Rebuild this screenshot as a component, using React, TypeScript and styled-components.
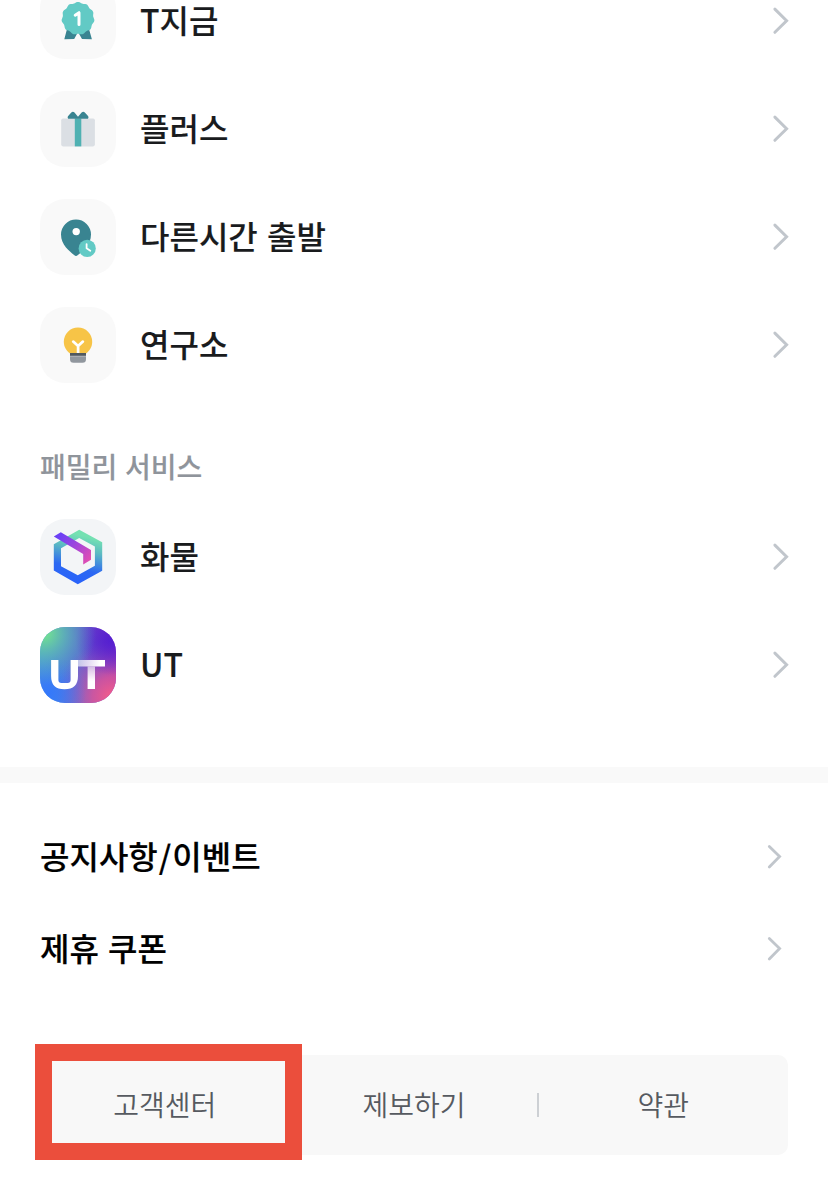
import React from "react";
import styled, { createGlobalStyle } from "styled-components";

const GlobalStyle = createGlobalStyle`
  * { box-sizing: border-box; }
  body {
    margin: 0;
    background: #fff;
    font-family: "Noto Sans CJK KR", sans-serif;
    overflow: hidden;
  }
`;

const Screen = styled.main`
  width: 828px;
  height: 1186px;
  overflow: hidden;
  background: #fff;
  display: flex;
  flex-direction: column;
`;

const ServiceList = styled.section<{ $top: number }>`
  display: flex;
  flex-direction: column;
  gap: 32px;
  flex: none;
  margin-top: ${(p) => p.$top}px;
  padding: 0 38px 0 40px;
`;

const ServiceRow = styled.div`
  display: flex;
  align-items: center;
  height: 76px;
`;

const IconTile = styled.div<{ $bg: string }>`
  width: 76px;
  height: 76px;
  border-radius: 25px;
  overflow: hidden;
  background: ${(p) => p.$bg};
  svg { display: block; }
`;

const ServiceName = styled.span`
  flex: 1;
  margin-left: 24px;
  padding-bottom: 4px;
  font-size: 32px;
  line-height: 36px;
  font-weight: 500;
  word-spacing: 2px;
  -webkit-text-stroke: 0.12px currentColor;
  color: #191b1d;
`;

const SectionTitle = styled.h2`
  flex: none;
  margin: 63px 0 1px 40px;
  height: 40px;
  font-size: 28px;
  line-height: 40px;
  font-weight: 500;
  word-spacing: 1.5px;
  -webkit-text-stroke: 0.12px currentColor;
  color: #8f949b;
`;

const Divider = styled.div`
  flex: none;
  height: 16px;
  margin-top: 64px;
  background: #f9f9f9;
`;

const MenuList = styled.nav`
  flex: none;
  display: flex;
  flex-direction: column;
  padding: 28px 45px 0 40px;
`;

const MenuRow = styled.div`
  display: flex;
  align-items: center;
  justify-content: space-between;
  height: 92px;
`;

const MenuLabel = styled.span`
  padding-bottom: 4px;
  font-size: 32px;
  line-height: 40px;
  font-weight: 500;
  word-spacing: 2px;
  -webkit-text-stroke: 0.2px currentColor;
  color: #000;
`;

const Slash = styled.span`
  margin: 0 1px;
`;

const Footer = styled.footer`
  position: relative;
  flex: none;
  display: flex;
  height: 100px;
  margin: 60px 40px 0;
  border-radius: 10px;
  background: #f8f8f8;
`;

const FooterLink = styled.div`
  flex: 1;
  display: flex;
  align-items: center;
  justify-content: center;
  padding-bottom: 2px;
  font-size: 28px;
  font-weight: 350;
  line-height: 40px;
  color: #565a60;
`;

const Separator = styled.i`
  align-self: center;
  width: 2px;
  height: 24px;
  margin: 0 0 0 -2px;
  background: #cdd0d4;
`;

const Highlight = styled.div`
  position: absolute;
  left: -4.7px;
  top: -11px;
  width: 267px;
  height: 116px;
  border: 17px solid #eb4e3c;
`;

const Chevron = ({ small = false }: { small?: boolean }) =>
  small ? (
    <svg width="18" height="28" viewBox="0 0 18 28" fill="none" stroke="#c1c6cc" strokeWidth="2.8" strokeLinecap="round" strokeLinejoin="miter">
      <path d="M4.3 3.4 14.6 13.6 4.3 23.9" />
    </svg>
  ) : (
    <svg width="20" height="30" viewBox="0 0 20 30" fill="none" stroke="#c1c6cc" strokeWidth="3" strokeLinecap="round" strokeLinejoin="miter">
      <path d="M4.9 3.1 16.6 14.7 4.9 26.3" />
    </svg>
  );

const scallop = Array.from({ length: 121 }, (_, i) => {
  const a = (i / 120) * Math.PI * 2;
  const r = 15.9 + 0.6 * Math.cos(a * 11);
  return `${(38 + r * Math.sin(a)).toFixed(2)},${(35.4 - r * Math.cos(a)).toFixed(2)}`;
}).join(" ");

const Medal = () => (
  <svg width="76" height="76" viewBox="0 0 76 76">
    <path d="M27 46 24.3 56.3 34.2 56 38 49 42 56 51.9 56.3 49 46Z" fill="#398491" />
    <polygon points={scallop} fill="#62cac5" />
    <path d="M35.2 32.2 39 29.7V41.5" fill="none" stroke="#fff" strokeWidth="3" strokeLinecap="round" strokeLinejoin="round" />
  </svg>
);

const Gift = () => (
  <svg width="76" height="76" viewBox="0 0 76 76">
    <rect x="21.2" y="27.4" width="33.7" height="28" rx="1.8" fill="#dbdfe4" />
    <rect x="34.8" y="27.4" width="6.5" height="28" fill="#4fb1b2" />
    <path d="M28.2 27.7c-1-1.1-.5-2.2.4-3.1l2.7-3.1c1.1-1.2 2.3-.9 3.2.1L38 25.8l3.6-4.2c1-1 2.2-1.3 3.2-.1l2.8 3.1c.9.9 1.3 2 .4 3.1Z" fill="#398491" />
  </svg>
);

const TimedPin = () => (
  <svg width="76" height="76" viewBox="0 0 76 76">
    <path d="M36 20.5a15 15 0 0 1 15 15c0 10.5-8.4 16.4-13.1 20.6a2.8 2.8 0 0 1-3.8 0C29.4 51.9 21 46 21 35.5a15 15 0 0 1 15-15Z" fill="#398491" />
    <circle cx="36.2" cy="32.6" r="3.7" fill="#fff" />
    <circle cx="47.2" cy="49.4" r="8.6" fill="#62cac5" />
    <path d="M46.6 45.1v4.1l3.7 2.5" fill="none" stroke="#fff" strokeWidth="1.8" strokeLinecap="round" strokeLinejoin="round" />
  </svg>
);

const Bulb = () => (
  <svg width="76" height="76" viewBox="0 0 76 76">
    <path d="M30 46.5c-3.5-2.6-6.2-6.7-6.2-11.8a14.2 14.2 0 0 1 28.4 0c0 5.1-2.7 9.2-6.2 11.8Z" fill="#f7c447" />
    <path d="m33.2 34.6 4.9 4.5 4.8-4.5M38.1 39.1V46" fill="none" stroke="#fff" strokeWidth="2.7" strokeLinecap="round" strokeLinejoin="round" />
    <path d="M30 46h16v3H30Z" fill="#515960" />
    <path d="M30 49h16v3.3a3.5 3.5 0 0 1-3.5 3.5h-9a3.5 3.5 0 0 1-3.5-3.5Z" fill="#91979e" />
    <path d="M30 49.2h16" stroke="#c5c8cb" strokeWidth=".7" />
  </svg>
);

const CargoLogo = () => (
  <svg width="76" height="76" viewBox="0 0 76 76">
    <defs>
      <linearGradient id="cargoRing" x1="46" y1="12" x2="33" y2="65" gradientUnits="userSpaceOnUse">
        <stop offset=".1" stopColor="#74e1b2" />
        <stop offset=".35" stopColor="#5bb9c3" />
        <stop offset=".7" stopColor="#2c68f2" />
        <stop offset="1" stopColor="#2962fb" />
      </linearGradient>
      <linearGradient id="cargoRibbon" x1="15" y1="16" x2="49" y2="43" gradientUnits="userSpaceOnUse">
        <stop offset=".1" stopColor="#6b40f5" />
        <stop offset=".6" stopColor="#ab46d6" />
        <stop offset="1" stopColor="#e34fb1" />
      </linearGradient>
    </defs>
    <path fillRule="evenodd" fill="url(#cargoRing)" d="M39.2 10.7 62.2 23.2V51.8L37.8 65.2 13.8 51.4V25.2ZM39.2 19 21 29.2V47.2L37.8 56.3 54.9 46.8V27.4Z" />
    <path d="M13.8 17.6 20.8 13.3 51 31V40.8L43.2 45.4V35Z" fill="url(#cargoRibbon)" />
  </svg>
);

const UTLogo = () => (
  <svg width="76" height="76" viewBox="0 0 76 76">
    <defs>
      <linearGradient id="utBase" x1="5" y1="42" x2="75" y2="26" gradientUnits="userSpaceOnUse">
        <stop stopColor="#4690e6" />
        <stop offset=".48" stopColor="#5b6cd2" />
        <stop offset="1" stopColor="#7529c5" />
      </linearGradient>
      <radialGradient id="utGreen" cx="4" cy="6" r="52" gradientUnits="userSpaceOnUse">
        <stop stopColor="#76e98a" />
        <stop offset=".4" stopColor="#5fbfae" stopOpacity=".75" />
        <stop offset="1" stopColor="#539fc5" stopOpacity="0" />
      </radialGradient>
      <radialGradient id="utViolet" cx="70" cy="14" r="34" gradientUnits="userSpaceOnUse">
        <stop stopColor="#511fd2" stopOpacity=".9" />
        <stop offset="1" stopColor="#511bcf" stopOpacity="0" />
      </radialGradient>
      <radialGradient id="utPink" cx="72" cy="70" r="56" gradientUnits="userSpaceOnUse">
        <stop stopColor="#f65d88" />
        <stop offset=".35" stopColor="#dc5599" stopOpacity=".85" />
        <stop offset="1" stopColor="#a550be" stopOpacity="0" />
      </radialGradient>
      <radialGradient id="utBlue" cx="8" cy="66" r="38" gradientUnits="userSpaceOnUse">
        <stop stopColor="#3478fb" />
        <stop offset="1" stopColor="#3970f6" stopOpacity="0" />
      </radialGradient>
      <linearGradient id="utBar" x1="38" y1="0" x2="60" y2="0" gradientUnits="userSpaceOnUse">
        <stop stopColor="#fff" stopOpacity=".6" />
        <stop offset="1" stopColor="#fff" />
      </linearGradient>
      <linearGradient id="utStem" x1="0" y1="39" x2="0" y2="54" gradientUnits="userSpaceOnUse">
        <stop stopColor="#fff" stopOpacity=".6" />
        <stop offset="1" stopColor="#fff" />
      </linearGradient>
    </defs>
    <rect width="76" height="76" fill="url(#utBase)" />
    <rect width="76" height="76" fill="url(#utPink)" />
    <rect width="76" height="76" fill="url(#utBlue)" />
    <rect width="76" height="76" fill="url(#utViolet)" />
    <rect width="76" height="76" fill="url(#utGreen)" />
    <path d="M11.1 33H18.4V53Q18.4 56 21.4 56H27.6Q30.6 56 30.6 53V33H38V49C38 58 33.5 62.2 24.5 62.2S11.1 58 11.1 49Z" fill="#fff" />
    <path d="M38 33H65V39.4H38Z" fill="url(#utBar)" />
    <path d="M47.6 39.4H55V62H47.6Z" fill="url(#utStem)" />
  </svg>
);

interface Service {
  name: string;
  icon: React.ReactNode;
  bg?: string;
}

const services: Service[] = [
  { name: "T지금", icon: <Medal /> },
  { name: "플러스", icon: <Gift /> },
  { name: "다른시간 출발", icon: <TimedPin /> },
  { name: "연구소", icon: <Bulb /> },
];

const family: Service[] = [
  { name: "화물", icon: <CargoLogo />, bg: "#f3f5f7" },
  { name: "UT", icon: <UTLogo />, bg: "transparent" },
];

const Services = ({ items, top }: { items: Service[]; top: number }) => (
  <ServiceList $top={top}>
    {items.map((s) => (
      <ServiceRow key={s.name}>
        <IconTile $bg={s.bg ?? "#f9f9f9"}>{s.icon}</IconTile>
        <ServiceName>{s.name}</ServiceName>
        <Chevron />
      </ServiceRow>
    ))}
  </ServiceList>
);

export default function App() {
  return (
    <>
      <GlobalStyle />
      <Screen>
        <Services items={services} top={-17} />
        <SectionTitle>패밀리 서비스</SectionTitle>
        <Services items={family} top={32} />
        <Divider />
        <MenuList>
          <MenuRow>
            <MenuLabel>공지사항<Slash>/</Slash>이벤트</MenuLabel>
            <Chevron small />
          </MenuRow>
          <MenuRow>
            <MenuLabel>제휴 쿠폰</MenuLabel>
            <Chevron small />
          </MenuRow>
        </MenuList>
        <Footer>
          <FooterLink>고객센터</FooterLink>
          <Separator />
          <FooterLink>제보하기</FooterLink>
          <Separator />
          <FooterLink>약관</FooterLink>
          <Highlight />
        </Footer>
      </Screen>
    </>
  );
}
